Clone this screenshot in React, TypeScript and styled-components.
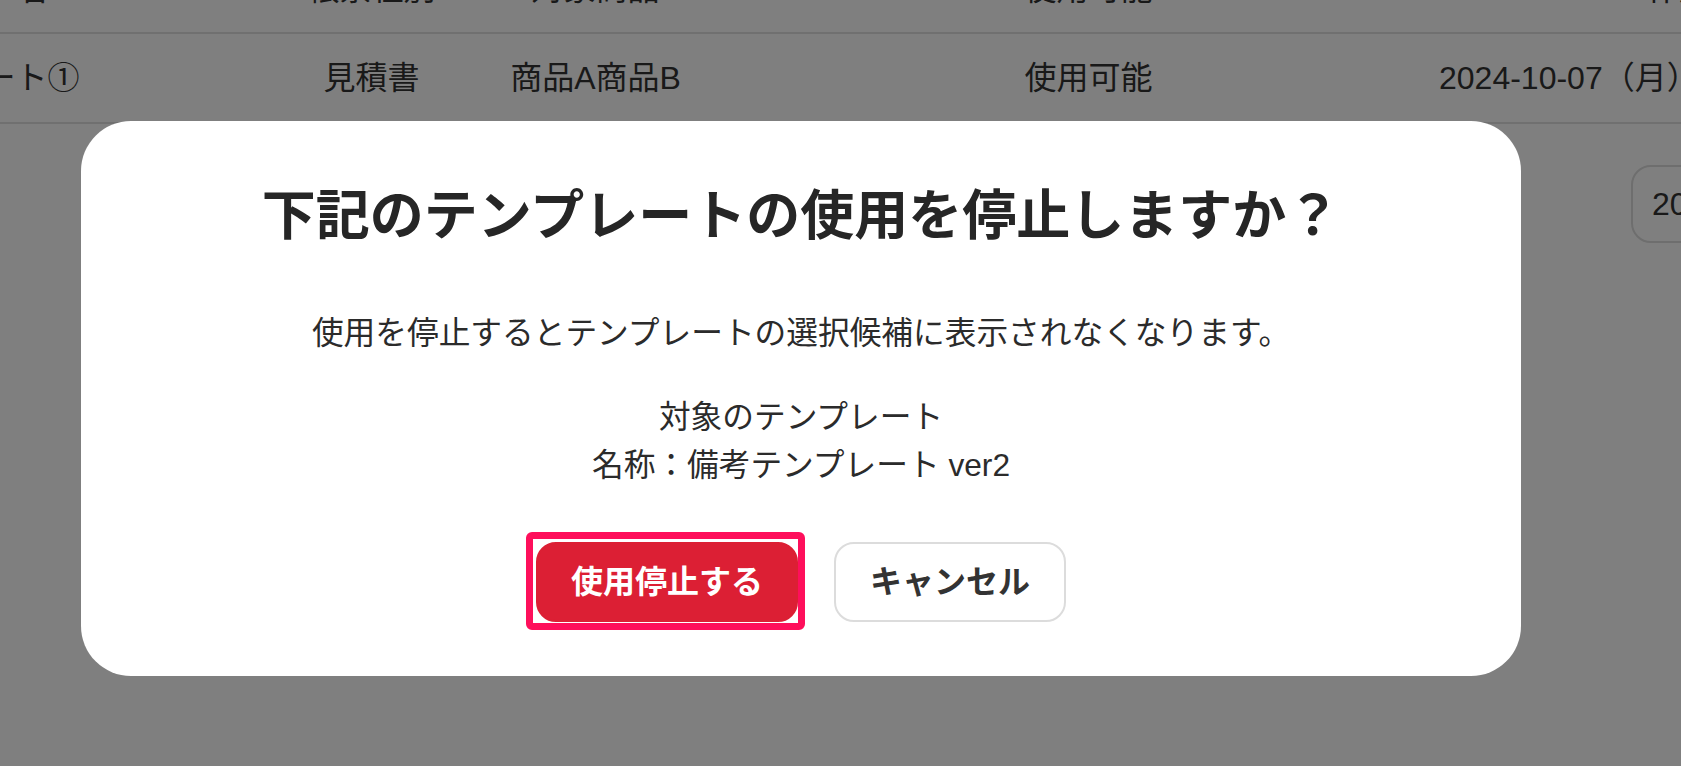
import React from "react";
import styled, { createGlobalStyle } from "styled-components";

const GlobalStyle = createGlobalStyle`
  html, body {
    margin: 0;
    padding: 0;
    background: #ffffff;
  }
  body {
    font-family: "Liberation Sans", "Noto Sans CJK JP", sans-serif;
    color: #333333;
    overflow: hidden;
  }
  * {
    box-sizing: border-box;
  }
`;

const COLUMNS = "708px 163px 285px 701px 400px";

const Page = styled.div`
  position: relative;
  width: 1681px;
  height: 766px;
  overflow: hidden;
  background: #ffffff;
`;

const Table = styled.div`
  display: flex;
  flex-direction: column;
  width: 2257px;
  margin-left: -418px;
  margin-top: -55px;
`;

const Row = styled.div<{ $height: number; $border?: boolean }>`
  display: grid;
  grid-template-columns: ${COLUMNS};
  align-items: center;
  height: ${(p) => p.$height}px;
  border-bottom: ${(p) => (p.$border ? "2px solid #e0e0e0" : "none")};
`;

const Cell = styled.div<{ $align?: "center" | "start"; $indent?: number }>`
  display: flex;
  justify-content: ${(p) => (p.$align === "start" ? "flex-start" : "center")};
  padding-left: ${(p) => p.$indent ?? 0}px;
  font-size: 32px;
  line-height: 48px;
  white-space: nowrap;
  color: #333333;
`;

const DateField = styled.div`
  margin-left: 192px;
  width: 300px;
  height: 78px;
  display: flex;
  align-items: center;
  padding-left: 19px;
  border: 2px solid #dcdcdc;
  border-radius: 20px;
  font-size: 32px;
  color: #333333;
`;

const Overlay = styled.div`
  position: fixed;
  inset: 0;
  background: rgba(0, 0, 0, 0.5);
  display: flex;
  align-items: flex-start;
  justify-content: flex-start;
`;

const Modal = styled.div`
  margin-top: 121px;
  margin-left: 81px;
  width: 1440px;
  height: 555px;
  background: #ffffff;
  border-radius: 50px;
  display: flex;
  flex-direction: column;
  align-items: center;
  padding: 63px 0 54px;
`;

const Title = styled.h2`
  margin: 0;
  font-size: 54px;
  line-height: 64px;
  font-weight: 700;
  color: #262626;
  white-space: nowrap;
`;

const Text = styled.p<{ $gap: number }>`
  margin: ${(p) => p.$gap}px 0 0;
  font-size: 31.7px;
  line-height: 48px;
  font-weight: 400;
  color: #2b2b2b;
  text-align: center;
  white-space: nowrap;
`;

const Actions = styled.div`
  display: flex;
  gap: 36px;
  margin-top: 53px;
`;

const Button = styled.button<{ $variant: "danger" | "plain" }>`
  position: relative;
  height: 80px;
  padding: 0 ${(p) => (p.$variant === "danger" ? 33 : 34)}px;
  border-radius: 20px;
  font-family: inherit;
  font-size: 32px;
  font-weight: 700;
  line-height: 1;
  cursor: pointer;
  white-space: nowrap;
  background: ${(p) => (p.$variant === "danger" ? "#dc1f34" : "#ffffff")};
  color: ${(p) => (p.$variant === "danger" ? "#ffffff" : "#333333")};
  border: 2px solid ${(p) => (p.$variant === "danger" ? "#dc1f34" : "#dcdcdc")};
`;

const Highlight = styled.span`
  position: absolute;
  inset: -12px -9px -10px -12px;
  border: 7px solid #fe0f5b;
  border-radius: 6px;
  pointer-events: none;
`;

export default function App() {
  return (
    <>
      <GlobalStyle />
      <Page>
        <Table>
          <Row $height={89} $border>
            <Cell>テンプレート名</Cell>
            <Cell>帳票種別</Cell>
            <Cell>対象商品</Cell>
            <Cell>使用可能</Cell>
            <Cell $align="start" $indent={208}>作成日</Cell>
          </Row>
          <Row $height={90} $border>
            <Cell>備考テンプレート①</Cell>
            <Cell>見積書</Cell>
            <Cell>商品A商品B</Cell>
            <Cell>使用可能</Cell>
            <Cell $align="start">2024-10-07（月）</Cell>
          </Row>
          <Row $height={160}>
            <Cell />
            <Cell />
            <Cell />
            <Cell />
            <Cell $align="start">
              <DateField>2024-10-08</DateField>
            </Cell>
          </Row>
        </Table>
        <Overlay>
          <Modal role="dialog" aria-modal="true">
            <Title>下記のテンプレートの使用を停止しますか？</Title>
            <Text $gap={61}>
              使用を停止するとテンプレートの選択候補に表示されなくなります。
            </Text>
            <Text $gap={36}>
              対象のテンプレート
              <br />
              名称：備考テンプレート ver2
            </Text>
            <Actions>
              <Button $variant="danger">
                使用停止する
                <Highlight />
              </Button>
              <Button $variant="plain">キャンセル</Button>
            </Actions>
          </Modal>
        </Overlay>
      </Page>
    </>
  );
}
